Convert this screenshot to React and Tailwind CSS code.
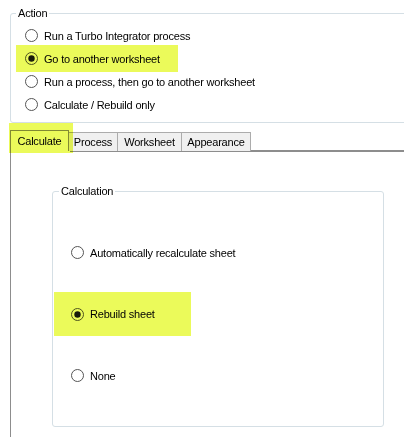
import React from "react";

function Radio({ checked }) {
  return (
    <svg width="13" height="13" viewBox="0 0 13 13" className="shrink-0">
      <circle cx="6.5" cy="6.5" r="6" fill="#ffffff" stroke="#555555" strokeWidth="1" />
      {checked && <circle cx="6.5" cy="6.5" r="3.2" fill="#1a1a1a" />}
    </svg>
  );
}

function ActionRow({ checked, label }) {
  return (
    <div className="flex h-[23px] items-center gap-[6px]">
      <Radio checked={checked} />
      <span className="whitespace-nowrap">{label}</span>
    </div>
  );
}

function CalcRow({ checked, label }) {
  return (
    <div className="flex h-[61.5px] items-center gap-[6px]">
      <Radio checked={checked} />
      <span className="whitespace-nowrap">{label}</span>
    </div>
  );
}

export default function App() {
  return (
    <div
      className="relative h-[437px] w-[404px] overflow-hidden bg-white text-[11px] leading-[14px] tracking-[-0.2px] text-black"
      style={{ fontFamily: '"Liberation Sans", Arial, sans-serif' }}
    >
      {/* Action group */}
      <fieldset className="ml-[10px] mt-[6px] w-[430px] rounded-[3px] border border-[#d5dfe5] pb-[6px] pl-[14px] pt-[4px]">
        <legend className="ml-[-9px] px-[2px] leading-[14px]">Action</legend>
        <div className="flex flex-col">
          <ActionRow label="Run a Turbo Integrator process" />
          <ActionRow checked label="Go to another worksheet" />
          <ActionRow label="Run a process, then go to another worksheet" />
          <ActionRow label="Calculate / Rebuild only" />
        </div>
      </fieldset>

      {/* Tabs */}
      <div className="ml-[10px] mt-[7px] flex h-[21px] items-end">
        <div className="flex h-[21px] w-[59px] items-center justify-center border-l border-r border-t border-[#8d8d8d] bg-white">
          Calculate
        </div>
        <div className="flex h-[19px] w-[49px] items-center justify-center border-r border-t border-[#acacac] bg-[#f0f0f0]">
          Process
        </div>
        <div className="flex h-[19px] w-[64px] items-center justify-center border-r border-t border-[#acacac] bg-[#f0f0f0]">
          Worksheet
        </div>
        <div className="flex h-[19px] w-[69px] items-center justify-center border-r border-t border-[#acacac] bg-[#f0f0f0]">
          Appearance
        </div>
        <div className="h-px flex-1 bg-[#8d8d8d]" />
      </div>

      {/* Tab panel */}
      <div className="ml-[10px] flex h-[300px] flex-col border-l border-[#8d8d8d]">
        <div className="ml-[59px] h-px bg-[#8d8d8d]" />
        <fieldset className="ml-[41px] mt-[32px] w-[332px] rounded-[3px] border border-[#d5dfe5] pb-[19px] pl-[18px] pt-[24px]">
          <legend className="ml-[-12px] px-[2px] leading-[14px]">Calculation</legend>
          <div className="flex flex-col">
            <CalcRow label="Automatically recalculate sheet" />
            <CalcRow checked label="Rebuild sheet" />
            <CalcRow label="None" />
          </div>
        </fieldset>
      </div>

      {/* Highlighter annotations */}
      <div className="pointer-events-none absolute left-[16px] top-[45px] h-[27px] w-[162px] bg-[#ebfa5a] mix-blend-multiply" />
      <div className="pointer-events-none absolute left-[9px] top-[123px] h-[30px] w-[64px] bg-[#ebfa5a] mix-blend-multiply" />
      <div className="pointer-events-none absolute left-[54px] top-[292px] h-[44px] w-[137px] bg-[#ebfa5a] mix-blend-multiply" />
    </div>
  );
}
